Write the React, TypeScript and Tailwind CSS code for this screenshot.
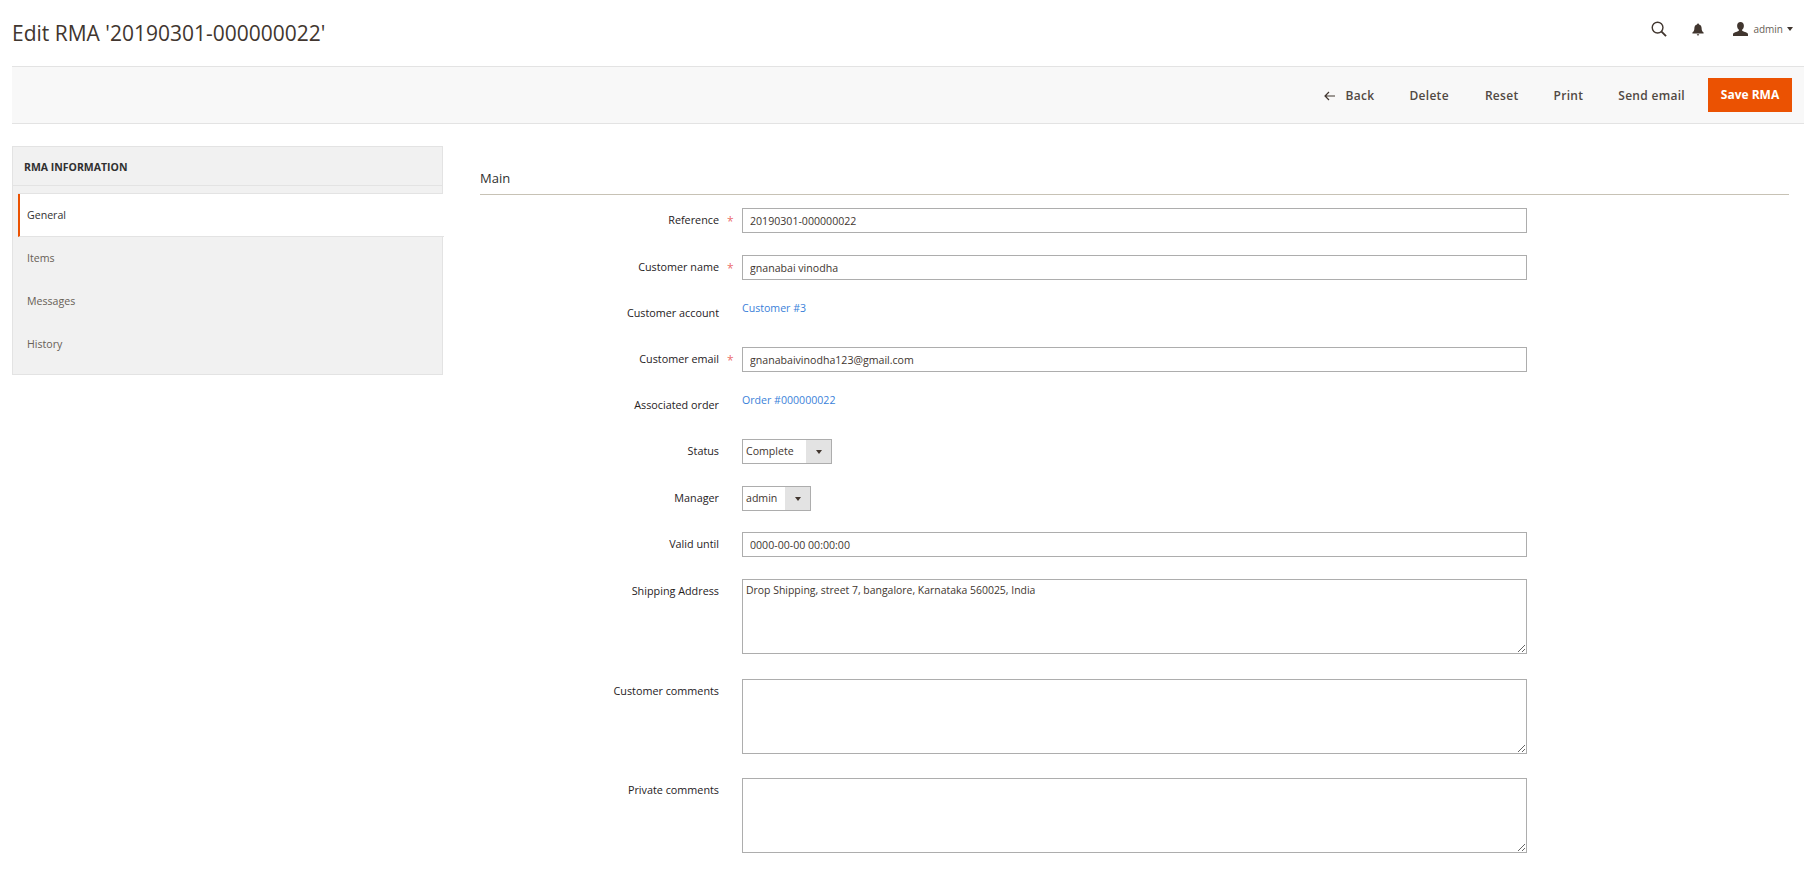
import React from "react";

const inputCls =
  "block h-[25px] w-[785px] border border-[#adadad] bg-white px-[7px] text-[10.6px] text-[#41362f] outline-none";

function Row({
  label,
  required,
  mt,
  children,
}: {
  label: string;
  required?: boolean;
  mt: string;
  children: React.ReactNode;
}) {
  return (
    <div className={`flex ${mt}`}>
      <div className="flex h-[25px] w-[262px] shrink-0 items-center justify-end text-[10.8px] text-[#26211d]">
        <span>{label}</span>
        <span className={`ml-[8px] w-[15px] pr-[9px] pt-[3px] text-center text-[12px] ${required ? "text-[#e22626]/70" : "text-transparent"}`}>*</span>
      </div>
      {children}
    </div>
  );
}

function LinkValue({ text }: { text: string }) {
  return <a className="block h-[25px] text-[10.6px] leading-[15px] text-[#3a7fd9]">{text}</a>;
}

function FakeSelect({ value, w }: { value: string; w: string }) {
  return (
    <div className={`flex h-[25px] ${w} border border-[#adadad] bg-white text-[10.6px] text-[#41362f]`}>
      <div className="flex flex-1 items-center pl-[3px]">{value}</div>
      <div className="flex w-[25px] items-center justify-center bg-[#e3e3e3]">
        <span className="h-0 w-0 border-x-[3px] border-t-[4px] border-x-transparent border-t-[#41362f]" />
      </div>
    </div>
  );
}

function ToolbarButton({ children, ml }: { children: React.ReactNode; ml: string }) {
  return (
    <span className={`flex items-center ${ml} pt-[2px] text-[12px] font-semibold tracking-[0.3px] text-[#514943]`}>
      {children}
    </span>
  );
}

export default function App() {
  return (
    <div
      className="h-[870px] w-[1810px] overflow-hidden bg-white"
      style={{ fontFamily: '"Open Sans", sans-serif' }}
    >
      <header className="flex h-[66px] items-center justify-between pl-[12px] pr-[17px]">
        <h1 className="text-[21px] leading-none text-[#41362f]">Edit RMA '20190301-000000022'</h1>
        <div className="-mt-[8px] flex items-center text-[#41362f]">
          <svg width="16" height="16" viewBox="0 0 17 17" fill="none" stroke="currentColor" strokeWidth="1.5">
            <circle cx="7" cy="7" r="5.7" />
            <path d="M11.2 11.2L16 16" strokeWidth="2" />
          </svg>
          <svg className="ml-[25px]" width="12" height="13" viewBox="0 0 12 13" fill="currentColor">
            <path d="M6 0.5c.6 0 1 .4 1 .9 1.8.4 2.6 1.9 2.6 3.6 0 2.2.6 3.5 2 4.6v.9H.4v-.9c1.4-1.100 2-2.400 2-4.600 0-1.700.8-3.200 2.600-3.600 0-.5.400-.9 1-.9z" />
            <path d="M4.800 11.300h2.400a1.200 1.200 0 0 1-2.400 0z" />
          </svg>
          <svg className="ml-[29px]" width="15" height="14" viewBox="0 0 15 14" fill="currentColor">
            <path d="M7.500 0c2.100 0 3.400 1.500 3.400 3.700 0 1.700-.8 3.300-1.800 4.100v.8c.4.600 1.500 1 3 1.500 1.800.6 2.900 1.200 2.900 2.300V14H0v-1.600c0-1.100 1.100-1.700 2.900-2.300 1.500-.5 2.600-.9 3-1.500v-.8C4.900 7 4.100 5.400 4.100 3.700 4.100 1.500 5.400 0 7.500 0z" />
          </svg>
          <span className="ml-[5px] text-[10px] text-[#676056]">admin</span>
          <span className="ml-[4px] h-0 w-0 border-x-[3px] border-t-[4px] border-x-transparent border-t-[#41362f]" />
        </div>
      </header>

      <div className="ml-[12px] mr-[6px] flex h-[58px] items-center justify-end border-y border-[#e3e3e3] bg-[#f8f8f8] pr-[12px]">
        <ToolbarButton ml="ml-0">
          <svg width="11" height="10" viewBox="0 0 11 10" fill="none" stroke="#41362f" strokeWidth="1.2" className="mr-[11px]">
            <path d="M11 5H1M5 1L1 5l4 4" />
          </svg>
          Back
        </ToolbarButton>
        <ToolbarButton ml="ml-[35px]">Delete</ToolbarButton>
        <ToolbarButton ml="ml-[36px]">Reset</ToolbarButton>
        <ToolbarButton ml="ml-[35px]">Print</ToolbarButton>
        <ToolbarButton ml="ml-[35px]">Send email</ToolbarButton>
        <button className="ml-[23px] flex h-[34px] w-[84px] items-center justify-center bg-[#eb5202] text-[12px] font-bold text-white">
          Save RMA
        </button>
      </div>

      <div className="flex pl-[12px] pt-[22px]">
        <aside className="relative h-[229px] w-[431px] shrink-0 border border-[#e3e3e3] bg-[#f1f1f1]">
          <div className="flex h-[39px] items-center border-b border-[#e3e3e3] pl-[11px] text-[10.5px] font-bold text-[#303030]">
            <span className="pt-[3px]">RMA INFORMATION</span>
          </div>
          <nav className="mt-[7px] ml-[5px] border-t border-[#e3e3e3] text-[10.6px]">
            <div className="flex h-[43px] w-[426px] items-center border-b border-l-[2px] border-b-[#e3e3e3] border-l-[#eb5202] bg-white pl-[7px] pt-[1px] text-[#303030]">
              General
            </div>
            <div className="flex h-[43px] items-center pl-[9px] text-[#676056]">Items</div>
            <div className="flex h-[43px] items-center pl-[9px] text-[#676056]">Messages</div>
            <div className="flex h-[43px] items-center pl-[9px] text-[#676056]">History</div>
          </nav>
        </aside>

        <main className="ml-[37px] w-[1309px] shrink-0">
          <div className="flex h-[49px] items-end border-b border-[#c7c2b5] pb-[6px] text-[13px] text-[#303030]">
            Main
          </div>

          <Row label="Reference" required mt="mt-[13px]">
            <input className={inputCls} defaultValue="20190301-000000022" />
          </Row>
          <Row label="Customer name" required mt="mt-[22px]">
            <input className={inputCls} defaultValue="gnanabai vinodha" />
          </Row>
          <Row label="Customer account" mt="mt-[21px]">
            <LinkValue text="Customer #3" />
          </Row>
          <Row label="Customer email" required mt="mt-[21px]">
            <input className={inputCls} defaultValue="gnanabaivinodha123@gmail.com" />
          </Row>
          <Row label="Associated order" mt="mt-[21px]">
            <LinkValue text="Order #000000022" />
          </Row>
          <Row label="Status" mt="mt-[21px]">
            <FakeSelect value="Complete" w="w-[90px]" />
          </Row>
          <Row label="Manager" mt="mt-[22px]">
            <FakeSelect value="admin" w="w-[69px]" />
          </Row>
          <Row label="Valid until" mt="mt-[21px]">
            <input className={inputCls} defaultValue="0000-00-00 00:00:00" />
          </Row>
          <Row label="Shipping Address" mt="mt-[22px]">
            <textarea
              className="block h-[75px] w-[785px] border border-[#adadad] bg-white px-[3px] pt-[3px] text-[10.45px] text-[#41362f] outline-none"
              defaultValue="Drop Shipping, street 7, bangalore, Karnataka 560025, India"
            />
          </Row>
          <Row label="Customer comments" mt="mt-[25px]">
            <textarea className="block h-[75px] w-[785px] border border-[#adadad] bg-white outline-none" />
          </Row>
          <Row label="Private comments" mt="mt-[24px]">
            <textarea className="block h-[75px] w-[785px] border border-[#adadad] bg-white outline-none" />
          </Row>
        </main>
      </div>
    </div>
  );
}
